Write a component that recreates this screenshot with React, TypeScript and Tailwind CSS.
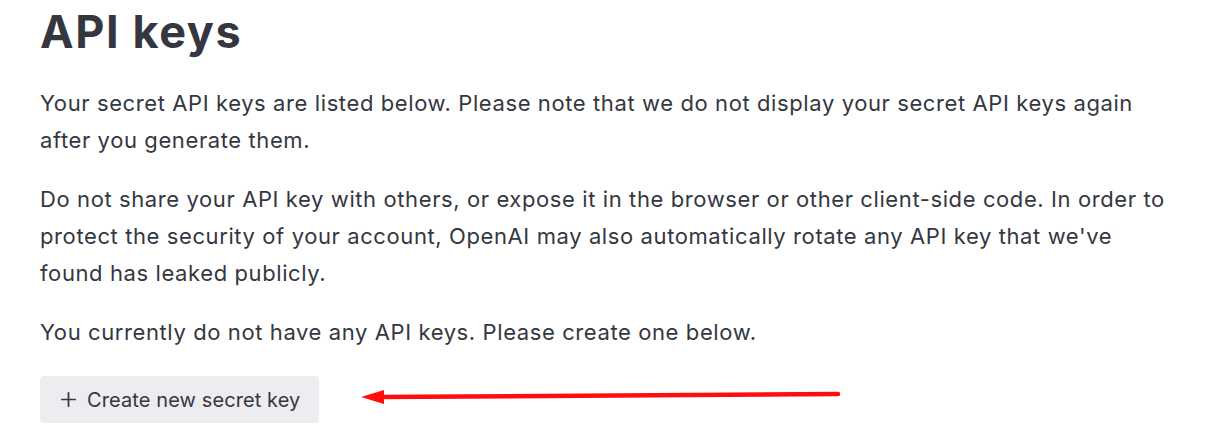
import { Plus } from "lucide-react";

function App() {
  return (
    <div className="relative w-[1205px] h-[440px] bg-white overflow-hidden font-['Inter',sans-serif] text-[#353740]">
      <div className="pl-10 w-[1205px]">
        <h1 className="text-[45px] font-bold leading-[64px] text-[#353740] tracking-[1.6px]">API keys</h1>
        <p className="mt-[21px] text-[22px] leading-[37px] tracking-[0.6px]">
          Your secret API keys are listed below. Please note that we do not display your secret API keys again
          <br />
          after you generate them.
        </p>
        <p className="mt-[22px] text-[22px] leading-[37px] tracking-[0.6px]">
          Do not share your API key with others, or expose it in the browser or other client-side code. In order to
          <br />
          protect the security of your account, OpenAI may also automatically rotate any API key that we've
          <br />
          found has leaked publicly.
        </p>
        <p className="mt-[22px] text-[22px] leading-[37px] tracking-[0.6px]">
          You currently do not have any API keys. Please create one below.
        </p>
        <button className="mt-[25px] flex items-center gap-[7px] h-[47px] pl-[17px] pr-[19px] rounded-[4px] bg-[#ececf1] text-[20px] tracking-[0.1px] text-[#353740]">
          <Plus size={23} strokeWidth={1.8} />
          Create new secret key
        </button>
      </div>
      <svg className="absolute left-0 top-0" width="1205" height="440">
        <line x1="838" y1="394" x2="378" y2="397" stroke="#ff0d0d" strokeWidth="4.5" strokeLinecap="round" />
        <polygon points="361,397 384,390 384,404" fill="#ff0d0d" />
      </svg>
    </div>
  );
}

export default App;
